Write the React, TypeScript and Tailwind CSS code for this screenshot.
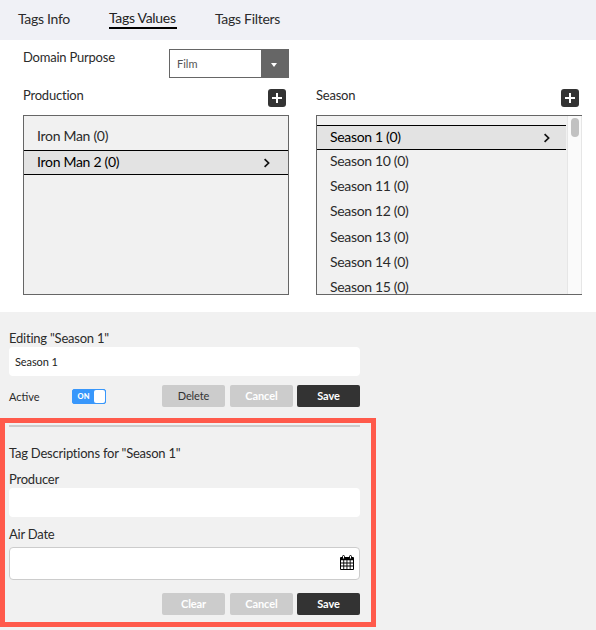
import type { ReactNode } from 'react';

const seasons = ['10', '11', '12', '13', '14', '15'];

function Chevron() {
  return (
    <svg width="8" height="10" viewBox="0 0 8 10" fill="none" stroke="#111" strokeWidth="1.7">
      <path d="M1.6 1.2 5.6 5l-4 3.8" />
    </svg>
  );
}

function AddButton() {
  return (
    <button className="h-[18px] w-[18px] rounded-[3px] bg-[#333]">
      <svg width="18" height="18" viewBox="0 0 18 18" stroke="#fff" strokeWidth="2">
        <path d="M9 4v10M4 9h10" />
      </svg>
    </button>
  );
}

function Caption({ children }: { children: ReactNode }) {
  return <div className="h-5 text-[13px] leading-5 tracking-[-0.22px] whitespace-nowrap">{children}</div>;
}

function ActionButton({ label, kind }: { label: string; kind: 'plain' | 'muted' | 'dark' }) {
  const tone =
    kind === 'plain'
      ? 'bg-[#ccc] text-[#333]'
      : kind === 'muted'
        ? 'bg-[#ccc] font-bold text-white'
        : 'bg-[#333] font-bold text-white';
  return (
    <button className={`h-[22px] w-[63px] rounded-[2px] text-[11px] leading-[22px] tracking-[-0.1px] ${tone}`}>
      {label}
    </button>
  );
}

function CalendarIcon() {
  return (
    <svg width="14" height="15" viewBox="0 0 14 15">
      <path fill="#000" d="M1 2h12a1 1 0 0 1 1 1v11a1 1 0 0 1-1 1H1a1 1 0 0 1-1-1V3a1 1 0 0 1 1-1Z" />
      <path
        fill="#fff"
        d="M1 5.3h2.3v2.2H1zM4.2 5.3h2.3v2.2H4.2zM7.4 5.3h2.3v2.2H7.4zM10.6 5.3H13v2.2h-2.4zM1 8.4h2.3v2.2H1zM4.2 8.4h2.3v2.2H4.2zM7.4 8.4h2.3v2.2H7.4zM10.6 8.4H13v2.2h-2.4zM1 11.5h2.3V14H1zM4.2 11.5h2.3V14H4.2zM7.4 11.5h2.3V14H7.4zM10.6 11.5H13V14h-2.4z"
      />
      <rect x="2.5" y="0.5" width="2" height="3.6" rx="1" fill="#fff" stroke="#000" strokeWidth="1" />
      <rect x="9.5" y="0.5" width="2" height="3.6" rx="1" fill="#fff" stroke="#000" strokeWidth="1" />
    </svg>
  );
}

export default function App() {
  return (
    <div className="h-[630px] w-[596px] overflow-hidden bg-white font-['Lato',sans-serif] text-[#2b2b2b]">
      <nav className="flex h-10 items-start bg-[#f0f1f6] pl-[18px] text-[14px] leading-5 tracking-[-0.3px] whitespace-nowrap">
        <div className="w-[91px] pt-[9px]">Tags Info</div>
        <div className="w-[106px] pt-2">
          <span className="block h-[21px] w-[68px] border-b-2 border-black text-[#222]">Tags Values</span>
        </div>
        <div className="pt-[9px]">Tags Filters</div>
      </nav>

      <main className="h-[272px] pl-[23px]">
        <div className="flex h-[45px]">
          <div className="w-[146px] pt-[7px]">
            <Caption>Domain Purpose</Caption>
          </div>
          <div className="mt-[9px] flex h-[29px] w-[120px] border border-[#666] bg-white">
            <div className="flex-1 pl-[7px] text-[11px] leading-[27px] text-[#555]">Film</div>
            <div className="flex w-[27px] items-center justify-center bg-[#666]">
              <div className="mt-[2px] mr-px border-x-[3.5px] border-t-[4px] border-x-transparent border-t-white" />
            </div>
          </div>
        </div>

        <div className="flex gap-[27px]">
          <section className="w-[266px]">
            <div className="flex h-[30px] justify-between pr-[3px]">
              <Caption>Production</Caption>
              <div className="pt-1">
                <AddButton />
              </div>
            </div>
            <div className="h-[180px] border border-[#666] bg-[#f1f1f1] pt-[9px] text-[14px] tracking-[-0.3px]">
              <div className="h-[25px] pl-[13px] leading-[22px]">Iron Man (0)</div>
              <div className="flex h-[25px] items-center justify-between border-y border-black bg-[#e3e3e3] pr-[17px] pl-[13px] leading-[21px] text-black">
                <span className="pb-[2px]">Iron Man 2 (0)</span>
                <Chevron />
              </div>
            </div>
          </section>

          <section className="w-[266px]">
            <div className="flex h-[30px] justify-between pr-[3px]">
              <Caption>Season</Caption>
              <div className="pt-1">
                <AddButton />
              </div>
            </div>
            <div className="flex h-[180px] overflow-hidden border-y border-l border-[#666] bg-[#f1f1f1] text-[14px] tracking-[-0.33px]">
              <div className="w-[249px] pt-[9px]">
                <div className="flex h-[25px] items-center justify-between border-y border-black bg-[#e3e3e3] pr-[15px] pl-[13px] leading-[21px] text-black">
                  <span className="pb-[2px]">Season 1 (0)</span>
                  <Chevron />
                </div>
                {seasons.map((n) => (
                  <div key={n} className="h-[25.2px] pl-[13px] leading-[21px]">
                    Season {n} (0)
                  </div>
                ))}
              </div>
              <div className="ml-px flex w-[15px] justify-center border-x border-[#e6e6e6] bg-[#fafafa] pt-[2px]">
                <div className="h-[19px] w-2 rounded-full bg-[#c1c1c1]" />
              </div>
            </div>
          </section>
        </div>
      </main>

      <div className="h-[318px] bg-[#f1f1f1]">
        <div className="h-[106px] w-[360px] pt-4 pl-[9px]">
          <Caption>Editing "Season 1"</Caption>
          <div className="mt-[-1px] h-[29px] rounded-[4px] bg-white pl-[6px] text-[11px] leading-[30px] tracking-[-0.1px] text-[#222]">
            Season 1
          </div>
          <div className="mt-[9px] flex h-[22px]">
            <div className="w-[63px] text-[11px] leading-[24px]">Active</div>
            <div className="mt-1 mr-14 flex h-[15px] w-[34px] rounded-[2px] border border-[#3897fb] bg-[#3897fb]">
              <span className="flex-1 text-center text-[7.5px] leading-[13px] font-black text-white">ON</span>
              <span className="h-[13px] w-[11px] rounded-[2px] bg-white" />
            </div>
            <ActionButton label="Delete" kind="plain" />
            <div className="w-[5px]" />
            <ActionButton label="Cancel" kind="muted" />
            <div className="w-1" />
            <ActionButton label="Save" kind="dark" />
          </div>
        </div>

        <section className="h-[209px] w-[376px] border-[5px] border-[#ff5a4b] pt-[2px] pr-[11px] pl-1">
          <div className="h-[2px] bg-[#ccc]" />
          <div className="pt-4">
            <Caption>Tag Descriptions for "Season 1"</Caption>
          </div>
          <div className="pt-[6px]">
            <Caption>Producer</Caption>
          </div>
          <div className="mt-[-1px] h-[29px] rounded-[4px] bg-white" />
          <div className="pt-[7px]">
            <Caption>Air Date</Caption>
          </div>
          <div className="mt-[3px] flex h-[33px] items-start justify-end rounded-[4px] border border-[#ccc] bg-white pt-[7px] pr-[5px]">
            <CalendarIcon />
          </div>
          <div className="mt-[13px] flex justify-end">
            <ActionButton label="Clear" kind="muted" />
            <div className="w-[5px]" />
            <ActionButton label="Cancel" kind="muted" />
            <div className="w-1" />
            <ActionButton label="Save" kind="dark" />
          </div>
        </section>
      </div>
    </div>
  );
}
